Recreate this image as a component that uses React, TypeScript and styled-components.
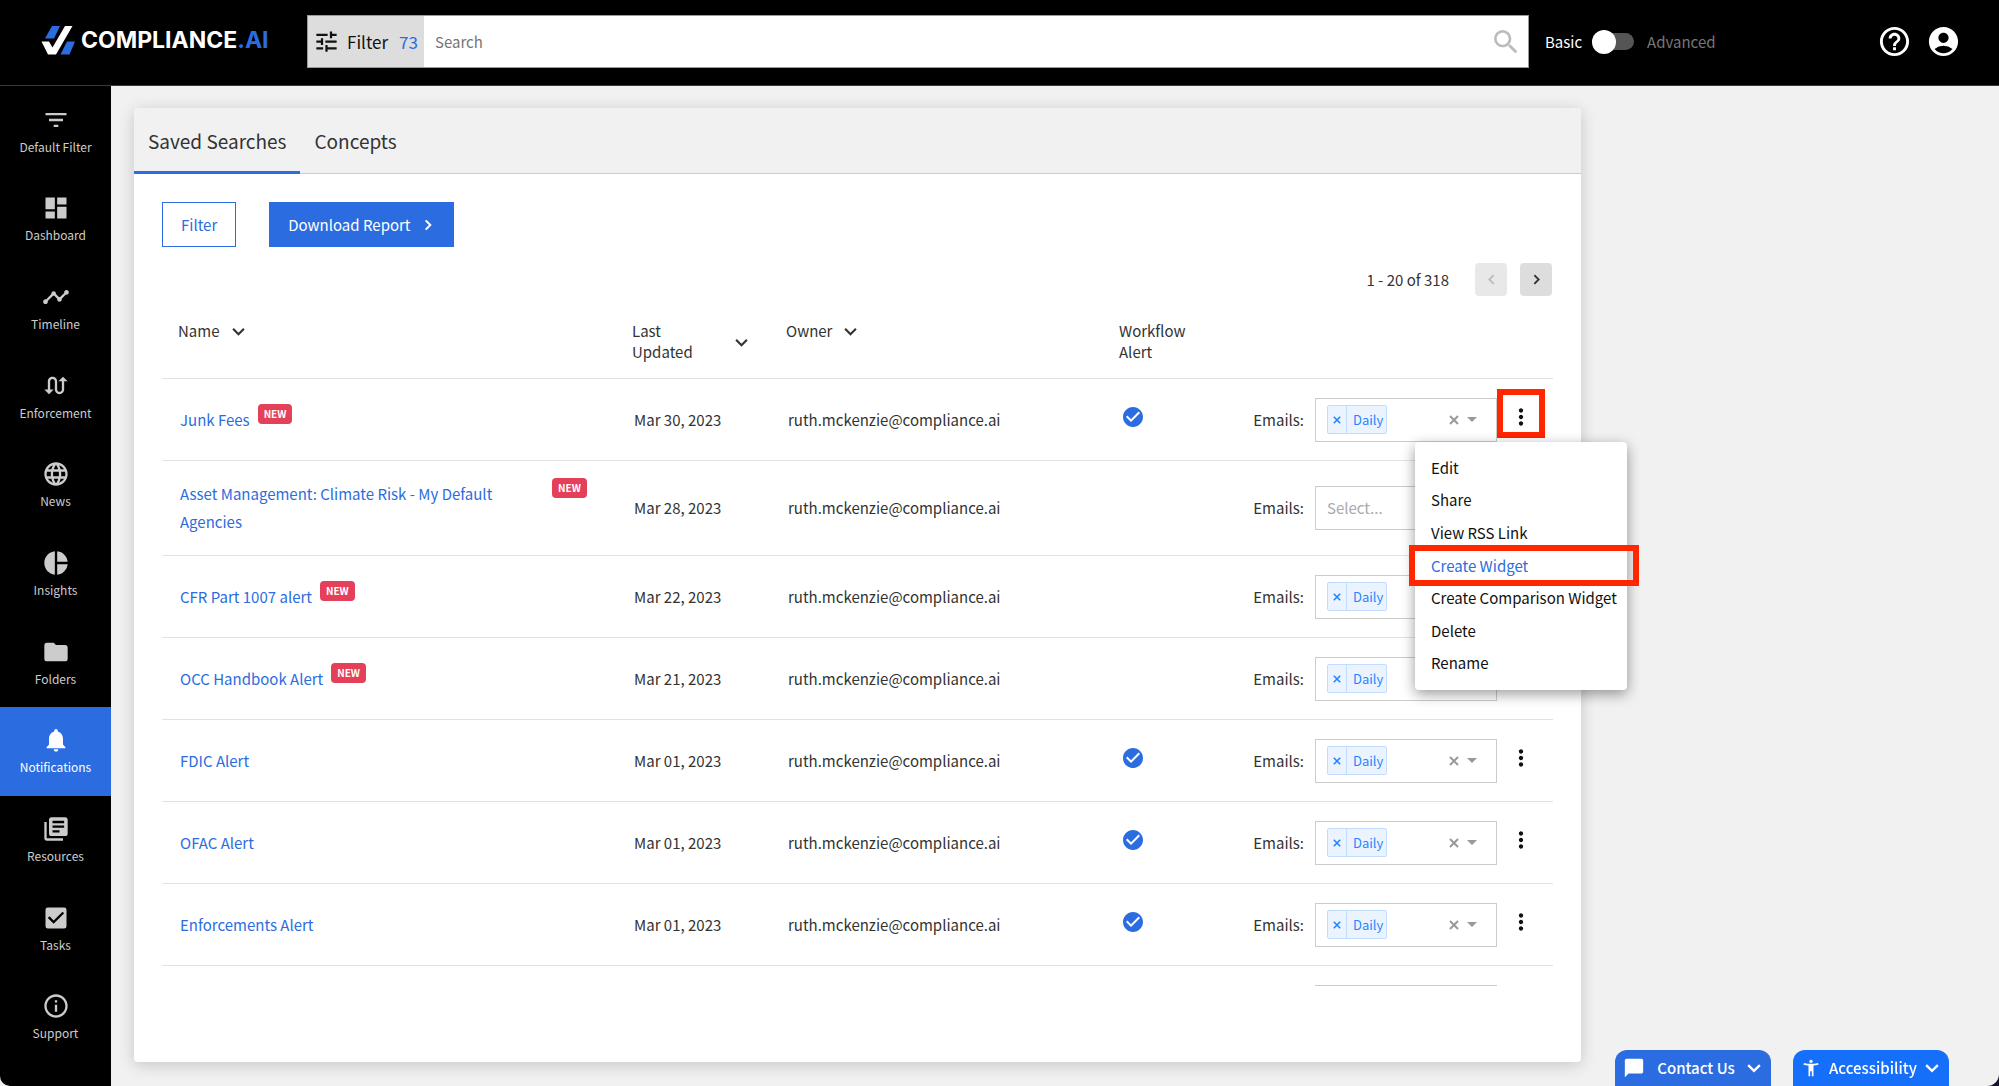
import React, { useState } from "react";
import styled, { createGlobalStyle, css } from "styled-components";
import {
  MdFilterList, MdDashboard, MdTimeline, MdSwapCalls, MdLanguage, MdPieChart, MdFolder,
  MdNotifications, MdLibraryBooks, MdCheckBox, MdInfoOutline, MdHelpOutline, MdAccountCircle,
  MdCheckCircle, MdMoreVert, MdTune, MdSearch, MdChatBubble, MdAccessibilityNew,
} from "react-icons/md";

const blue = "#2b6de0";
const red = "#ff2600";

const GlobalStyle = createGlobalStyle`
  *, *::before, *::after { box-sizing: border-box; }
  body {
    margin: 0;
    background: #17122e;
    color: #333;
    font: 15px/20px "Noto Sans CJK SC", "Noto Sans", sans-serif;
  }
  button, input, select { font: inherit; color: inherit; margin: 0; }
  button { border: 0; padding: 0; background: none; cursor: pointer; white-space: nowrap; }
  a { text-decoration: none; }
  svg { display: block; flex: none; }
`;

const Shell = styled.div`
  height: 100vh;
  display: flex;
  flex-direction: column;
  overflow: hidden;
  background: #f1f1f1;
  border-bottom-right-radius: 12px;
`;

const Header = styled.header`
  flex: none;
  height: 86px;
  display: flex;
  align-items: center;
  padding: 0 38px 2px 41px;
  background: #000;
  border-bottom: 1px solid #3a3a3a;
  color: #fff;
`;

const Logo = styled.a`
  display: flex;
  align-items: center;
  gap: 6px;
  width: 266px;
  flex: none;
  padding-bottom: 4px;
  color: #fff;
  font: 700 23px/30px Inter, sans-serif;
  span span { color: ${blue}; }
`;

const SearchBar = styled.form`
  flex: 1;
  height: 53px;
  display: flex;
  align-items: center;
  background: #fff;
  border: 1px solid #999;
  padding-right: 6px;
`;

const FilterToggle = styled.button`
  align-self: stretch;
  display: flex;
  align-items: center;
  padding: 0 6px 0 5px;
  background: #ddd;
  color: #111;
  font-size: 17px;
  svg { margin-right: 7px; }
  span { margin-left: 11px; color: ${blue}; }
`;

const SearchInput = styled.input`
  flex: 1;
  min-width: 0;
  height: 100%;
  border: 0;
  padding: 0 11px;
  outline: 0;
  color: #333;
  &::placeholder { color: #757575; opacity: 1; }
`;

const SearchButton = styled.button`
  color: #bbb;
`;

const ModeSwitch = styled.label`
  display: flex;
  align-items: center;
  margin-left: 16px;
  width: 332px;
  flex: none;
  gap: 10px;
  span + input + span { color: #777; margin-left: 3px; }
`;

const Switch = styled.input`
  appearance: none;
  margin: 0;
  width: 42px;
  height: 17px;
  border-radius: 9px;
  background: #555;
  display: flex;
  align-items: center;
  &::before {
    content: "";
    width: 24px;
    height: 24px;
    flex: none;
    border-radius: 50%;
    background: #fff;
  }
  &:checked { justify-content: flex-end; }
`;

const HeaderActions = styled.div`
  display: flex;
  gap: 14px;
  margin-left: auto;
`;

const Body = styled.div`
  flex: 1;
  min-height: 0;
  display: flex;
`;

const Nav = styled.nav`
  width: 111px;
  flex: none;
  display: flex;
  flex-direction: column;
  padding: 1px 0 24px;
  background: #000;
  border-bottom-left-radius: 10px;
`;

const NavItem = styled.a<{ $active?: boolean }>`
  flex: 1;
  display: flex;
  flex-direction: column;
  align-items: center;
  justify-content: center;
  gap: 3px;
  font-size: 12px;
  color: ${(p) => (p.$active ? "#fff" : "#ccc")};
  background: ${(p) => (p.$active ? blue : "transparent")};
`;

const Main = styled.main`
  flex: 1;
  min-width: 0;
  display: flex;
  padding: 22px 418px 24px 23px;
`;

const Card = styled.section`
  flex: 1;
  min-width: 0;
  display: flex;
  flex-direction: column;
  padding-bottom: 76px;
  background: #fff;
  border-radius: 4px;
  box-shadow: 0 3px 16px rgba(0, 0, 0, 0.18);
`;

const Tabs = styled.div`
  flex: none;
  height: 66px;
  display: flex;
  background: #f1f1f1;
  border-bottom: 1px solid #ccc;
  border-radius: 4px 4px 0 0;
`;

const Tab = styled.button<{ $active?: boolean }>`
  height: 66px;
  padding: 2px 14px 0;
  border-bottom: 3px solid ${(p) => (p.$active ? blue : "transparent")};
  font-size: 19px;
`;

const Content = styled.div`
  flex: 1;
  min-height: 0;
  display: flex;
  flex-direction: column;
  padding: 28px 28px 0;
`;

const Actions = styled.div`
  display: flex;
  gap: 33px;
`;

const Button = styled.button<{ $solid?: boolean }>`
  height: 45px;
  display: flex;
  align-items: center;
  gap: 10px;
  padding: 0 18px;
  border: 1px solid ${blue};
  color: ${(p) => (p.$solid ? "#fff" : blue)};
  background: ${(p) => (p.$solid ? blue : "#fff")};
`;

const Pager = styled.div`
  display: flex;
  justify-content: flex-end;
  align-items: center;
  gap: 13px;
  margin-top: 16px;
  padding-right: 1px;
  span { margin-right: 13px; }
`;

const PageButton = styled.button`
  width: 32px;
  height: 33px;
  display: grid;
  place-items: center;
  border-radius: 4px;
  background: #ddd;
  &:disabled { background: #e8e8e8; color: #bbb; }
`;

const Scroller = styled.div`
  flex: 1;
  min-height: 0;
  margin-top: 1px;
  overflow-x: visible;
  overflow-y: clip;
`;

const Table = styled.table`
  width: 100%;
  table-layout: fixed;
  border-collapse: separate;
  border-spacing: 0;
`;

const Th = styled.th<{ $w: string }>`
  width: ${(p) => p.$w};
  height: 82px;
  padding: 23px 16px 0;
  border-bottom: 1px solid #e2e2e2;
  vertical-align: top;
  text-align: left;
  font-weight: 400;
  line-height: 21px;
`;

const Sort = styled.button<{ $wide?: boolean }>`
  display: flex;
  align-items: center;
  gap: 12px;
  text-align: left;
  white-space: normal;
  width: ${(p) => (p.$wide ? "100%" : "auto")};
  padding-right: ${(p) => (p.$wide ? "6px" : "0")};
  justify-content: ${(p) => (p.$wide ? "space-between" : "flex-start")};
  span { max-width: 64px; }
  svg { margin-top: 2px; }
`;

const Td = styled.td<{ $pad?: string }>`
  height: 82px;
  padding: ${(p) => p.$pad ?? "0 18px"};
  border-bottom: 1px solid #e2e2e2;
`;

const NameCell = styled.div`
  display: flex;
  align-items: flex-start;
  gap: 8px;
  padding: 19px 0;
  line-height: 28px;
  a { color: ${blue}; max-width: 364px; }
`;

const NewBadge = styled.span`
  flex: none;
  height: 20px;
  margin-top: -2px;
  padding: 0 6px;
  border-radius: 4px;
  background: #e4405a;
  color: #fff;
  font-size: 10px;
  font-weight: 700;
  line-height: 20px;
`;

const WorkflowMark = styled.div`
  padding-bottom: 6px;
  color: ${blue};
`;

const EmailCell = styled.div`
  display: flex;
  align-items: center;
  justify-content: flex-end;
  gap: 11px;
`;

const SelectBox = styled.div`
  width: 182px;
  height: 44px;
  flex: none;
  display: flex;
  align-items: center;
  padding: 0 19px 0 11px;
  border: 1px solid #ccc;
  background: #fff;
  color: #aaa;
`;

const Chip = styled.span`
  height: 29px;
  display: flex;
  border: 1px solid #c2dcff;
  border-radius: 2px;
  background: #ebf3ff;
  color: #1f86ff;
  font-size: 13px;
  line-height: 27px;
  span { padding: 0 3px 0 6px; }
`;

const ChipRemove = styled.button`
  width: 19px;
  display: grid;
  place-items: center;
  border-right: 1px solid #c2dcff;
`;

const SelectTools = styled.div`
  margin-left: auto;
  display: flex;
  align-items: center;
  gap: 8px;
  color: #999;
`;

const Caret = styled.button`
  border: 5px solid transparent;
  border-top-color: #999;
  border-bottom: 0;
`;

const MoreWrap = styled.div`
  position: relative;
  width: 32px;
  margin-bottom: 6px;
`;

const MoreButton = styled.button<{ $marked?: boolean }>`
  position: relative;
  width: 32px;
  height: 32px;
  display: grid;
  place-items: center;
  color: #111;
  ${(p) => p.$marked && css`
    &::after {
      content: "";
      position: absolute;
      inset: -12px -8px -5px;
      border: 6px solid ${red};
    }
  `}
`;

const Menu = styled.div`
  position: absolute;
  z-index: 2;
  top: 41px;
  right: -90px;
  width: 212px;
  height: 248px;
  display: flex;
  flex-direction: column;
  padding: 10px 0;
  border-radius: 4px;
  background: #fff;
  box-shadow: 0 4px 14px rgba(0, 0, 0, 0.4);
`;

const MenuItem = styled.button<{ $marked?: boolean }>`
  position: relative;
  flex: 1;
  padding: 0 0 0 16px;
  text-align: left;
  color: ${(p) => (p.$marked ? blue : "#111")};
  ${(p) => p.$marked && css`
    &::after {
      content: "";
      position: absolute;
      inset: -4px -12px -4px -6px;
      border: 6px solid ${red};
    }
  `}
`;

const Dock = styled.div`
  position: fixed;
  right: 50px;
  bottom: 0;
  display: flex;
  gap: 22px;
`;

const DockButton = styled.button<{ $bright?: boolean }>`
  width: 156px;
  height: 36px;
  display: flex;
  align-items: center;
  justify-content: space-between;
  padding: 0 10px 0 8px;
  border-radius: 12px 12px 0 0;
  background: ${(p) => (p.$bright ? "#156ffb" : blue)};
  color: #fff;
  font-weight: 500;
`;

const navItems = [
  ["Default Filter", MdFilterList],
  ["Dashboard", MdDashboard],
  ["Timeline", MdTimeline],
  ["Enforcement", MdSwapCalls],
  ["News", MdLanguage],
  ["Insights", MdPieChart],
  ["Folders", MdFolder],
  ["Notifications", MdNotifications],
  ["Resources", MdLibraryBooks],
  ["Tasks", MdCheckBox],
  ["Support", MdInfoOutline],
] as const;

type Search = { name: string; isNew?: boolean; date: string; workflow?: boolean; email?: string };

const searches: Search[] = [
  { name: "Junk Fees", isNew: true, date: "Mar 30, 2023", workflow: true, email: "Daily" },
  { name: "Asset Management: Climate Risk - My Default Agencies", isNew: true, date: "Mar 28, 2023" },
  { name: "CFR Part 1007 alert", isNew: true, date: "Mar 22, 2023", email: "Daily" },
  { name: "OCC Handbook Alert", isNew: true, date: "Mar 21, 2023", email: "Daily" },
  { name: "FDIC Alert", date: "Mar 01, 2023", workflow: true, email: "Daily" },
  { name: "OFAC Alert", date: "Mar 01, 2023", workflow: true, email: "Daily" },
  { name: "Enforcements Alert", date: "Mar 01, 2023", workflow: true, email: "Daily" },
];

const menuItems = ["Edit", "Share", "View RSS Link", "Create Widget", "Create Comparison Widget", "Delete", "Rename"];

const Chevron = ({ size = 13, dir = "down" }: { size?: number; dir?: "down" | "left" | "right" }) => (
  <svg width={size} height={size} viewBox="0 0 12 12" fill="none" stroke="currentColor" strokeWidth={dir === "down" ? 2 : 1.7}>
    <path d={dir === "down" ? "M1 3.5l5 5 5-5" : dir === "left" ? "M8 2L4 6l4 4" : "M4 2l4 4-4 4"} />
  </svg>
);

const Cross = ({ size }: { size: number }) => (
  <svg width={size} height={size} viewBox="0 0 10 10" stroke="currentColor" strokeWidth={2}>
    <path d="M1 1l8 8M9 1l-8 8" />
  </svg>
);

const LogoMark = () => (
  <svg width="34" height="30" viewBox="0 0 34 30">
    <path d="M11 1h8l-6 12.500H4z" fill={blue} />
    <path d="M24 1h7.500L15 29.500H7L0.500 16.500H8l3.500 6z" fill="#fff" />
    <path d="M26 16.500h8l-5.500 13H19.500z" fill={blue} />
  </svg>
);

function EmailSelect({ value }: { value?: string }) {
  return (
    <SelectBox role="group" aria-label="Emails">
      {value ? (
        <Chip>
          <ChipRemove aria-label={`Remove ${value}`}><Cross size={8} /></ChipRemove>
          <span>{value}</span>
        </Chip>
      ) : "Select..."}
      <SelectTools>
        {value && <button aria-label="Clear"><Cross size={10} /></button>}
        <Caret aria-label="Open" />
      </SelectTools>
    </SelectBox>
  );
}

export default function App() {
  const [tab, setTab] = useState("Saved Searches");
  const [open, setOpen] = useState<number | null>(0);
  return (
    <Shell>
      <GlobalStyle />
      <Header>
        <Logo href="#"><LogoMark /><span>COMPLIANCE<span>.AI</span></span></Logo>
        <SearchBar onSubmit={(e) => e.preventDefault()}>
          <FilterToggle type="button"><MdTune size={27} />Filter<span>73</span></FilterToggle>
          <SearchInput aria-label="Search" placeholder="Search" />
          <SearchButton aria-label="Run search"><MdSearch size={32} /></SearchButton>
        </SearchBar>
        <ModeSwitch><span>Basic</span><Switch type="checkbox" /><span>Advanced</span></ModeSwitch>
        <HeaderActions>
          <button aria-label="Help"><MdHelpOutline size={35} /></button>
          <button aria-label="Account"><MdAccountCircle size={35} /></button>
        </HeaderActions>
      </Header>
      <Body>
        <Nav>
          {navItems.map(([label, Icon]) => (
            <NavItem key={label} href="#" $active={label === "Notifications"}>
              <Icon size={28} />{label}
            </NavItem>
          ))}
        </Nav>
        <Main>
          <Card>
            <Tabs>
              {["Saved Searches", "Concepts"].map((t) => (
                <Tab key={t} $active={t === tab} onClick={() => setTab(t)}>{t}</Tab>
              ))}
            </Tabs>
            <Content>
              <Actions>
                <Button>Filter</Button>
                <Button $solid>Download Report<Chevron dir="right" size={14} /></Button>
              </Actions>
              <Pager>
                <span>1 - 20 of 318</span>
                <PageButton disabled aria-label="Previous page"><Chevron dir="left" /></PageButton>
                <PageButton aria-label="Next page"><Chevron dir="right" /></PageButton>
              </Pager>
              <Scroller>
                <Table>
                  <thead>
                    <tr>
                      <Th $w="auto"><Sort>Name<Chevron /></Sort></Th>
                      <Th $w="154px"><Sort $wide><span>Last Updated</span><Chevron /></Sort></Th>
                      <Th $w="333px"><Sort>Owner<Chevron /></Sort></Th>
                      <Th $w="132px">Workflow<br />Alert</Th>
                      <Th $w="262px" aria-label="Emails" />
                      <Th $w="56px" aria-label="Options" />
                    </tr>
                  </thead>
                  <tbody>
                    {searches.map((s, i) => (
                      <tr key={s.name}>
                        <Td><NameCell><a href="#">{s.name}</a>{s.isNew && <NewBadge>NEW</NewBadge>}</NameCell></Td>
                        <Td>{s.date}</Td>
                        <Td>ruth.mckenzie@compliance.ai</Td>
                        <Td>{s.workflow && <WorkflowMark><MdCheckCircle size={24} /></WorkflowMark>}</Td>
                        <Td $pad="0"><EmailCell>Emails:<EmailSelect value={s.email} /></EmailCell></Td>
                        <Td $pad="0 0 0 8px">
                          <MoreWrap>
                            <MoreButton aria-label="Options" $marked={open === i} onClick={() => setOpen(open === i ? null : i)}>
                              <MdMoreVert size={26} />
                            </MoreButton>
                            {open === i && (
                              <Menu>
                                {menuItems.map((m) => <MenuItem key={m} $marked={m === "Create Widget"}>{m}</MenuItem>)}
                              </Menu>
                            )}
                          </MoreWrap>
                        </Td>
                      </tr>
                    ))}
                    <tr>
                      <Td colSpan={4} />
                      <Td $pad="0"><EmailCell><SelectBox /></EmailCell></Td>
                      <Td />
                    </tr>
                  </tbody>
                </Table>
              </Scroller>
            </Content>
          </Card>
        </Main>
      </Body>
      <Dock>
        <DockButton><MdChatBubble size={22} />Contact Us<Chevron size={14} /></DockButton>
        <DockButton $bright><MdAccessibilityNew size={20} />Accessibility<Chevron size={14} /></DockButton>
      </Dock>
    </Shell>
  );
}
